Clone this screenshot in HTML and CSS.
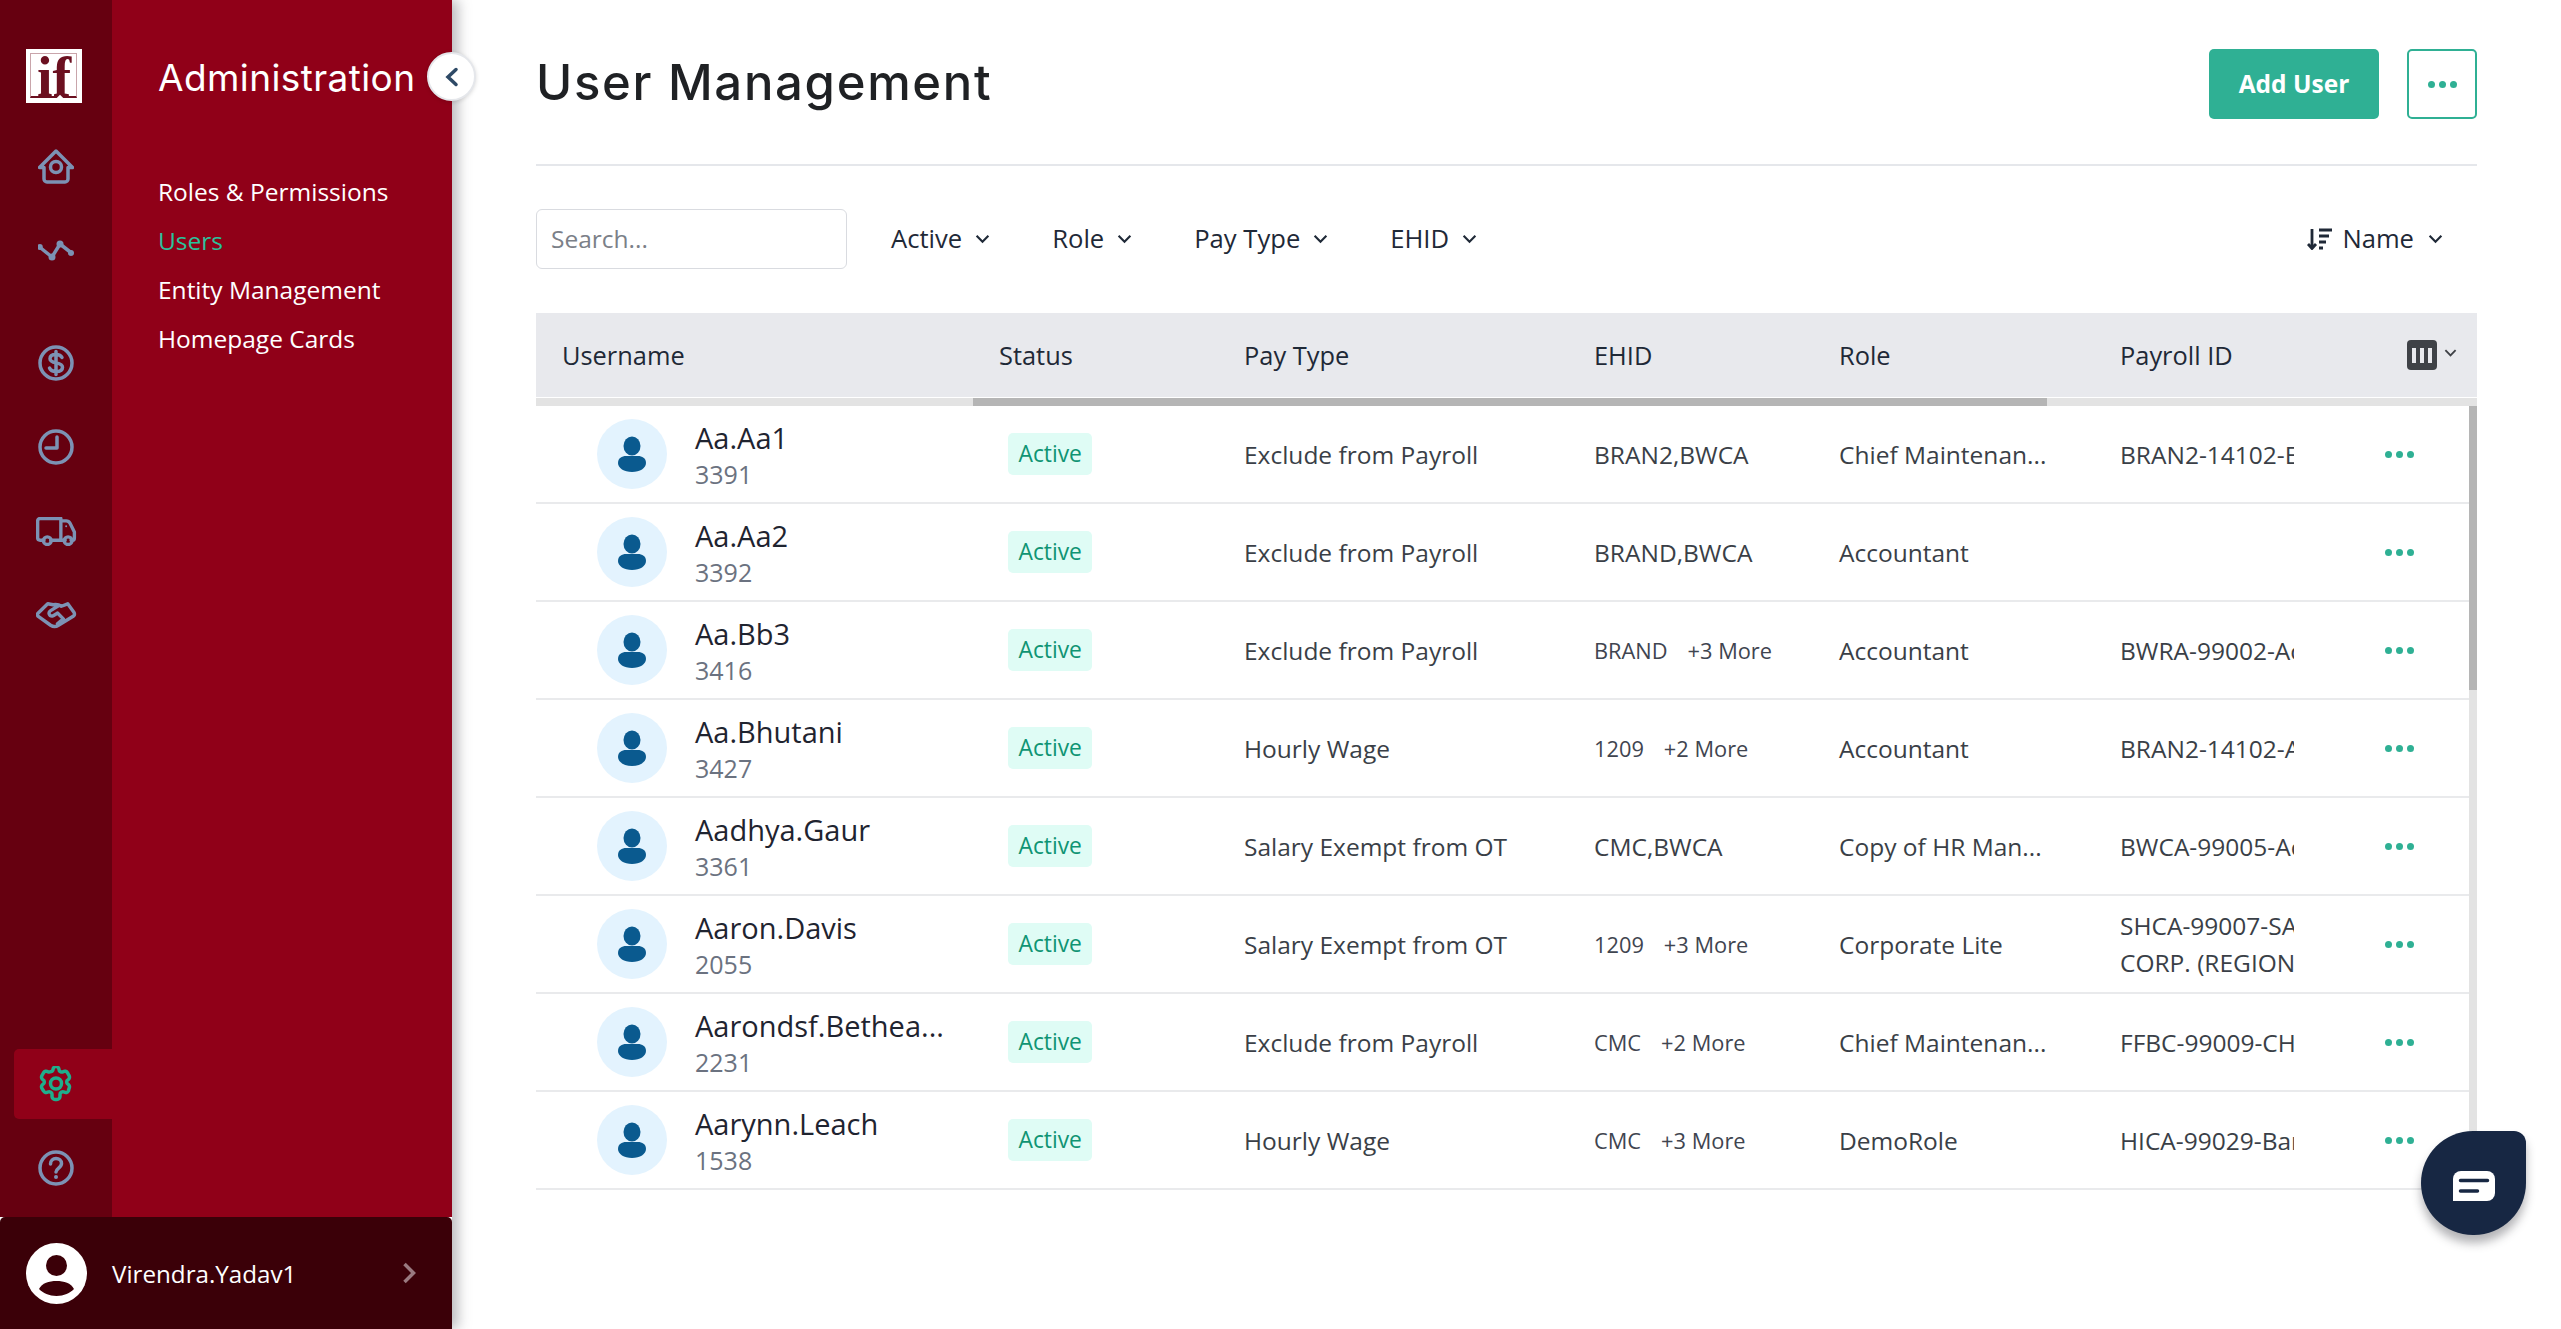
FILE: index.html
```html
<!DOCTYPE html>
<html lang="en">
<head>
<meta charset="utf-8">
<title>User Management</title>
<link rel="stylesheet" href="styles.css">
</head>
<body>
<div class="app">
  <aside class="sidebar">
    <div class="sidebar-top">
      <nav class="rail">
        <div class="logo"><span class="logo-text">if</span><i class="logo-gem"></i></div>
        <div class="rail-main">
          <a class="rail-item"><svg class="ri" viewBox="0 0 36 36"><path d="M1.500 18.500 18 2l16.500 16.500H30V30a3 3 0 0 1-3 3H9a3 3 0 0 1-3-3V18.500z"/><circle cx="18" cy="18" r="5.500"/></svg></a>
          <a class="rail-item"><svg class="ri" viewBox="0 0 36 36"><path d="M1.500 14 14 24l8-13 11.500 9"/><circle class="dot" cx="1.800" cy="14" r="3"/><circle class="dot" cx="14" cy="24" r="3.500"/><circle class="dot" cx="22" cy="11" r="3.500"/><circle class="dot" cx="33" cy="20" r="3"/></svg></a>
          <a class="rail-item rail-gap"><svg class="ri" viewBox="0 0 36 36"><circle cx="18" cy="18" r="16"/><path d="M24 12.500c-1-2-3-3-6-3-3.500 0-6 1.500-6 4.200 0 5.800 12.500 2.500 12.500 8.500 0 2.800-2.800 4.300-6.500 4.300-3 0-5.500-1.200-6.500-3.500M18 6.500v23"/></svg></a>
          <a class="rail-item"><svg class="ri" viewBox="0 0 36 36"><circle cx="18" cy="18" r="16"/><path d="M19 8v11h-11"/></svg></a>
          <a class="rail-item"><svg class="ri ri-wide" viewBox="0 0 42 30"><path d="M8 24H4a2.500 2.500 0 0 1-2.500-2.500V4A2.500 2.500 0 0 1 4 1.500h21.500V24H15M25.500 4h5.500c2 0 3.200 1 4 2.500l4.500 9V22a2 2 0 0 1-2 2h-1.500M30 24h-4.500"/><circle cx="11.500" cy="24.500" r="4"/><circle cx="33" cy="24.500" r="4"/><circle class="dot" cx="31" cy="9.500" r="1"/></svg></a>
          <a class="rail-item"><svg class="ri ri-wide" viewBox="0 0 42 28"><path d="M12 2 1.800 12c-.8 1-.5 2 .5 3L15 24c3 2 5 2 8 0l15.500-9.500c1.200-1 1.200-2 .5-3.500L32.500 2 26 4.500c-3-2-6-2-8.500-1.500zM23 4l-8 5c-3 2-1.500 6 2 5.500 2-.3 3-2 5-3l6 6-6 5"/></svg></a>
        </div>
        <div class="rail-bottom">
          <a class="rail-item rail-active"><svg class="ri ri-green" viewBox="0 0 36 36"><path d="M15 3.500a3 3 0 0 1 6 0c0 2 2.500 3.200 4.200 2.200a3 3 0 0 1 4.200 1l1.600 2.800a3 3 0 0 1-1 4.200c-1.800 1-1.800 3.600 0 4.600a3 3 0 0 1 1 4.200L30.400 25a3 3 0 0 1-4.200 1.100c-1.700-1-4.200.2-4.200 2.200v2.200a3 3 0 0 1-3 3h-2a3 3 0 0 1-3-3v-2.200c0-2-2.500-3.200-4.200-2.200A3 3 0 0 1 5.600 25L4 22.500a3 3 0 0 1 1-4.200c1.800-1 1.800-3.600 0-4.600a3 3 0 0 1-1-4.200l1.600-2.800a3 3 0 0 1 4.200-1C11.500 6.700 15 5.500 15 3.500z"/><circle cx="18" cy="17.500" r="5.500"/></svg></a>
          <a class="rail-item"><svg class="ri" viewBox="0 0 36 36"><circle cx="18" cy="18" r="16"/><path d="M12.500 14c0-3.500 2.500-5.500 5.500-5.500s5.500 2 5.500 5c0 4.500-5.500 4.500-5.500 8.500"/><circle class="dot" cx="18" cy="27" r="2"/></svg></a>
        </div>
      </nav>
      <div class="panel">
        <h2 class="panel-title">Administration</h2>
        <ul class="panel-menu">
          <li>Roles &amp; Permissions</li>
          <li class="current">Users</li>
          <li>Entity Management</li>
          <li>Homepage Cards</li>
        </ul>
      </div>
    </div>
    <div class="user-bar">
      <svg class="user-avatar" viewBox="0 0 61 61"><circle cx="30.500" cy="30.500" r="30.500" fill="#fff"/><circle cx="30.500" cy="22.500" r="10.500" fill="#3b0008"/><path d="M13 46c3-6 10-8 17.500-8S45 40 48 46c-4 4-10 7-17.500 7S17 50 13 46z" fill="#3b0008"/></svg>
      <span class="user-name">Virendra.Yadav1</span>
      <svg class="user-chev" viewBox="0 0 14 22"><path d="M2.500 2 11.500 11l-9 9"/></svg>
    </div>
    <button class="collapse"><svg viewBox="0 0 14 20"><path d="M11 2.500 3 10l8 7.500"/></svg></button>
  </aside>

  <main class="main">
    <header class="page-head">
      <h1 class="page-title">User Management</h1>
      <div class="page-actions">
        <button class="btn-primary">Add User</button>
        <button class="btn-more"><span class="dots"><i></i><i></i><i></i></span></button>
      </div>
    </header>

    <div class="filters">
      <div class="search">Search...</div>
      <div class="filter f1">Active<svg class="chev" viewBox="0 0 14 9"><path d="M1.500 1.500 7 7l5.500-5.500"/></svg></div>
      <div class="filter f2">Role<svg class="chev" viewBox="0 0 14 9"><path d="M1.500 1.500 7 7l5.500-5.500"/></svg></div>
      <div class="filter f3">Pay Type<svg class="chev" viewBox="0 0 14 9"><path d="M1.500 1.500 7 7l5.500-5.500"/></svg></div>
      <div class="filter f4">EHID<svg class="chev" viewBox="0 0 14 9"><path d="M1.500 1.500 7 7l5.500-5.500"/></svg></div>
      <div class="sort">
        <svg class="sort-icon" viewBox="0 0 26 22"><path d="M5 1v19M1 16l4 4.500L9 16M12 2h13M12 8h10M12 14h7M12 20h4"/></svg>
        Name<svg class="chev sort-chev" viewBox="0 0 14 9"><path d="M1.500 1.500 7 7l5.500-5.500"/></svg>
      </div>
    </div>

    <section class="table">
      <div class="thead">
        <div class="th c-user">Username</div>
        <div class="th">Status</div>
        <div class="th">Pay Type</div>
        <div class="th">EHID</div>
        <div class="th">Role</div>
        <div class="th">Payroll ID</div>
        <div class="col-pick">
          <svg class="col-icon" viewBox="0 0 30 30"><rect width="30" height="30" rx="4" fill="#3f4247"/><path d="M5 8h4v15H5zM13 8h4v15h-4zM21 8h4v15h-4z" fill="#e8e9ed"/></svg>
          <svg class="chev col-chev" viewBox="0 0 14 9"><path d="M1.500 1.500 7 7l5.500-5.500"/></svg>
        </div>
      </div>
      <div class="hbar"><div class="hthumb"></div></div>
      <div class="tbody-wrap">
        <div class="tbody">

          <div class="tr">
            <div class="td td-user"><svg class="avatar" viewBox="0 0 70 70"><circle cx="35" cy="35" r="35" fill="#e3f3fe"/><ellipse cx="35" cy="27" rx="8.500" ry="9.500" fill="#0a5a8f"/><path d="M21 44c0-5 4-7 8-7h12c4 0 8 2 8 7 0 5-6 9-14 9s-14-4-14-9z" fill="#0a5a8f"/></svg><div class="who"><div class="who-name">Aa.Aa1</div><div class="who-id">3391</div></div></div>
            <div class="td td-badge"><span class="badge">Active</span></div>
            <div class="td">Exclude from Payroll</div>
            <div class="td">BRAN2,BWCA</div>
            <div class="td">Chief Maintenan...</div>
            <div class="td"><div class="clip">BRAN2-14102-Exec</div></div>
            <div class="td td-act"><span class="dots"><i></i><i></i><i></i></span></div>
          </div>

          <div class="tr">
            <div class="td td-user"><svg class="avatar" viewBox="0 0 70 70"><circle cx="35" cy="35" r="35" fill="#e3f3fe"/><ellipse cx="35" cy="27" rx="8.500" ry="9.500" fill="#0a5a8f"/><path d="M21 44c0-5 4-7 8-7h12c4 0 8 2 8 7 0 5-6 9-14 9s-14-4-14-9z" fill="#0a5a8f"/></svg><div class="who"><div class="who-name">Aa.Aa2</div><div class="who-id">3392</div></div></div>
            <div class="td td-badge"><span class="badge">Active</span></div>
            <div class="td">Exclude from Payroll</div>
            <div class="td">BRAND,BWCA</div>
            <div class="td">Accountant</div>
            <div class="td"></div>
            <div class="td td-act"><span class="dots"><i></i><i></i><i></i></span></div>
          </div>

          <div class="tr">
            <div class="td td-user"><svg class="avatar" viewBox="0 0 70 70"><circle cx="35" cy="35" r="35" fill="#e3f3fe"/><ellipse cx="35" cy="27" rx="8.500" ry="9.500" fill="#0a5a8f"/><path d="M21 44c0-5 4-7 8-7h12c4 0 8 2 8 7 0 5-6 9-14 9s-14-4-14-9z" fill="#0a5a8f"/></svg><div class="who"><div class="who-name">Aa.Bb3</div><div class="who-id">3416</div></div></div>
            <div class="td td-badge"><span class="badge">Active</span></div>
            <div class="td">Exclude from Payroll</div>
            <div class="td td-more"><span>BRAND</span><span>+3 More</span></div>
            <div class="td">Accountant</div>
            <div class="td"><div class="clip">BWRA-99002-Acc</div></div>
            <div class="td td-act"><span class="dots"><i></i><i></i><i></i></span></div>
          </div>

          <div class="tr">
            <div class="td td-user"><svg class="avatar" viewBox="0 0 70 70"><circle cx="35" cy="35" r="35" fill="#e3f3fe"/><ellipse cx="35" cy="27" rx="8.500" ry="9.500" fill="#0a5a8f"/><path d="M21 44c0-5 4-7 8-7h12c4 0 8 2 8 7 0 5-6 9-14 9s-14-4-14-9z" fill="#0a5a8f"/></svg><div class="who"><div class="who-name">Aa.Bhutani</div><div class="who-id">3427</div></div></div>
            <div class="td td-badge"><span class="badge">Active</span></div>
            <div class="td">Hourly Wage</div>
            <div class="td td-more"><span>1209</span><span>+2 More</span></div>
            <div class="td">Accountant</div>
            <div class="td"><div class="clip">BRAN2-14102-Acc</div></div>
            <div class="td td-act"><span class="dots"><i></i><i></i><i></i></span></div>
          </div>

          <div class="tr">
            <div class="td td-user"><svg class="avatar" viewBox="0 0 70 70"><circle cx="35" cy="35" r="35" fill="#e3f3fe"/><ellipse cx="35" cy="27" rx="8.500" ry="9.500" fill="#0a5a8f"/><path d="M21 44c0-5 4-7 8-7h12c4 0 8 2 8 7 0 5-6 9-14 9s-14-4-14-9z" fill="#0a5a8f"/></svg><div class="who"><div class="who-name">Aadhya.Gaur</div><div class="who-id">3361</div></div></div>
            <div class="td td-badge"><span class="badge">Active</span></div>
            <div class="td">Salary Exempt from OT</div>
            <div class="td">CMC,BWCA</div>
            <div class="td">Copy of HR Man...</div>
            <div class="td"><div class="clip">BWCA-99005-Acc</div></div>
            <div class="td td-act"><span class="dots"><i></i><i></i><i></i></span></div>
          </div>

          <div class="tr">
            <div class="td td-user"><svg class="avatar" viewBox="0 0 70 70"><circle cx="35" cy="35" r="35" fill="#e3f3fe"/><ellipse cx="35" cy="27" rx="8.500" ry="9.500" fill="#0a5a8f"/><path d="M21 44c0-5 4-7 8-7h12c4 0 8 2 8 7 0 5-6 9-14 9s-14-4-14-9z" fill="#0a5a8f"/></svg><div class="who"><div class="who-name">Aaron.Davis</div><div class="who-id">2055</div></div></div>
            <div class="td td-badge"><span class="badge">Active</span></div>
            <div class="td">Salary Exempt from OT</div>
            <div class="td td-more"><span>1209</span><span>+3 More</span></div>
            <div class="td">Corporate Lite</div>
            <div class="td"><div class="clip clip-two">SHCA-99007-SALES<br>CORP. (REGIONAL)</div></div>
            <div class="td td-act"><span class="dots"><i></i><i></i><i></i></span></div>
          </div>

          <div class="tr">
            <div class="td td-user"><svg class="avatar" viewBox="0 0 70 70"><circle cx="35" cy="35" r="35" fill="#e3f3fe"/><ellipse cx="35" cy="27" rx="8.500" ry="9.500" fill="#0a5a8f"/><path d="M21 44c0-5 4-7 8-7h12c4 0 8 2 8 7 0 5-6 9-14 9s-14-4-14-9z" fill="#0a5a8f"/></svg><div class="who"><div class="who-name">Aarondsf.Bethea...</div><div class="who-id">2231</div></div></div>
            <div class="td td-badge"><span class="badge">Active</span></div>
            <div class="td">Exclude from Payroll</div>
            <div class="td td-more"><span>CMC</span><span>+2 More</span></div>
            <div class="td">Chief Maintenan...</div>
            <div class="td"><div class="clip">FFBC-99009-CHIEF</div></div>
            <div class="td td-act"><span class="dots"><i></i><i></i><i></i></span></div>
          </div>

          <div class="tr">
            <div class="td td-user"><svg class="avatar" viewBox="0 0 70 70"><circle cx="35" cy="35" r="35" fill="#e3f3fe"/><ellipse cx="35" cy="27" rx="8.500" ry="9.500" fill="#0a5a8f"/><path d="M21 44c0-5 4-7 8-7h12c4 0 8 2 8 7 0 5-6 9-14 9s-14-4-14-9z" fill="#0a5a8f"/></svg><div class="who"><div class="who-name">Aarynn.Leach</div><div class="who-id">1538</div></div></div>
            <div class="td td-badge"><span class="badge">Active</span></div>
            <div class="td">Hourly Wage</div>
            <div class="td td-more"><span>CMC</span><span>+3 More</span></div>
            <div class="td">DemoRole</div>
            <div class="td"><div class="clip">HICA-99029-Bank</div></div>
            <div class="td td-act"><span class="dots"><i></i><i></i><i></i></span></div>
          </div>

        </div>
        <div class="vbar"><div class="vthumb"></div></div>
      </div>
    </section>
  </main>
</div>
<button class="chat"><svg viewBox="0 0 42 30"><path d="M8 0h26a8 8 0 0 1 8 8v14a8 8 0 0 1-8 8H0V8a8 8 0 0 1 8-8z" fill="#fff"/><path d="M7.500 9.500h27M7.500 20h17" stroke="#172743" stroke-width="3.500" stroke-linecap="round" fill="none"/></svg></button>
</body>
</html>
```

FILE: styles.css
```css
* { box-sizing: border-box; }
html, body { margin: 0; height: 100%; overflow: hidden; background: #fff; }
body { font-family: "Open Sans", "Noto Sans", sans-serif; color: #1f2937; font-size: 24.500px; }

.app { display: flex; height: 1329px; }

/* sidebar */
.sidebar { position: relative; width: 452px; flex: none; display: flex; flex-direction: column; box-shadow: 6px 0 12px rgba(60, 60, 70, .35); z-index: 2; }
.sidebar-top { flex: 1; display: flex; min-height: 0; }
.rail { width: 112px; flex: none; background: #660010; display: flex; flex-direction: column; padding: 49px 0 14px; }
.logo { position: relative; width: 56px; height: 54px; margin-left: 26px; background: #fff; display: flex; justify-content: center; align-items: flex-end; flex: none; }
.logo::before { content: ""; position: absolute; left: 4px; right: 5px; top: 4px; bottom: 5px; border: 1.500px solid #c9a5ab; border-bottom: 2.500px solid #6b1020; }
.logo-text { position: relative; font-family: "Liberation Serif", serif; font-weight: 700; font-size: 56px; line-height: 48px; height: 50px; color: #6b1020; letter-spacing: 0; }
.logo-gem { position: absolute; left: 31px; bottom: 1px; width: 6px; height: 6px; background: #fff; transform: rotate(45deg); }
.rail-main { display: flex; flex-direction: column; margin-top: 29px; gap: 14.400px; }
.rail-bottom { margin-top: auto; display: flex; flex-direction: column; gap: 14px; }
.rail-item { height: 70px; display: flex; align-items: center; justify-content: center; }
.rail-gap { margin-top: 27px; }
.rail-active { margin-left: 14px; padding-right: 14px; background: #900018; border-radius: 5px 0 0 5px; }
.ri { width: 36px; height: 36px; fill: none; stroke: #7c92b4; stroke-width: 3.500; stroke-linecap: round; stroke-linejoin: round; }
.ri .dot { fill: #7c92b4; stroke: none; }
.ri-wide { width: 41px; height: 29px; }
.ri-green { stroke: #1fae8c; }

.panel { flex: 1; background: #900018; padding: 55px 0 0 46px; min-width: 0; }
.panel-title { margin: 0; font-family: Inter, sans-serif; font-weight: 400; font-size: 37px; letter-spacing: .4px; line-height: 46px; color: #fff; white-space: nowrap; }
.panel-menu { list-style: none; margin: 66px 0 0; padding: 0; color: #fff; }
.panel-menu li { height: 49px; line-height: 49px; white-space: nowrap; }
.panel-menu .current { color: #2bc29c; }

.user-bar { height: 112px; flex: none; background: #3b0008; border-radius: 5px 5px 0 0; display: flex; align-items: center; padding: 0 36px 0 26px; color: #fff; }
.user-avatar { width: 61px; height: 61px; flex: none; }
.user-name { margin-left: 25px; flex: 1; font-size: 24.200px; }
.user-chev { width: 14px; height: 22px; fill: none; stroke: #9a7a80; stroke-width: 3.500; }
.collapse { position: absolute; left: 427px; top: 52px; width: 49px; height: 49px; padding: 0; border-radius: 50%; background: #fff; border: 2px solid #e5e7eb; box-shadow: 0 1px 4px rgba(0, 0, 0, .15); display: flex; align-items: center; justify-content: center; }
.collapse svg { width: 14px; height: 20px; fill: none; stroke: #2e4a66; stroke-width: 3.500; stroke-linecap: round; }

/* main */
.main { flex: 1; min-width: 0; padding: 0 84px; }
.page-head { height: 166px; border-bottom: 2px solid #e5e7eb; display: flex; align-items: flex-start; justify-content: space-between; }
.page-title { margin: 56px 0 0; font-family: Inter, sans-serif; font-weight: 500; font-size: 49px; letter-spacing: 1.700px; line-height: 54px; color: #1f2124; white-space: nowrap; }
.page-actions { display: flex; gap: 28px; padding-top: 49px; }
.btn-primary { width: 170px; height: 70px; background: #2fb094; color: #fff; border: 0; border-radius: 5px; font: 700 24.500px "Open Sans", sans-serif; padding: 0 0 2px; }
.btn-more { width: 70px; height: 70px; background: #fff; border: 2px solid #2fb094; border-radius: 5px; padding: 0; display: flex; align-items: center; justify-content: center; }
.dots { display: inline-flex; gap: 4px; }
.dots i { width: 7px; height: 7px; border-radius: 50%; background: #2fb094; }

.filters { height: 147px; display: flex; align-items: center; padding-bottom: 2px; font-size: 25.600px; font-weight: 500; }
.search { width: 311px; height: 60px; border: 1.500px solid #d9dbe0; border-radius: 6px; padding: 0 14px; line-height: 57px; color: #7b8088; font-size: 24.500px; font-weight: 400; }
.filter { display: flex; align-items: center; color: #1f2937; white-space: nowrap; }
.chev { width: 15px; height: 10px; fill: none; stroke: #1f2937; stroke-width: 2; margin-left: 13px; flex: none; }
.f1 { margin-left: 44px; }
.f2 { margin-left: 62px; }
.f3 { margin-left: 62px; }
.f4 { margin-left: 62px; }
.sort { margin-left: auto; padding-right: 34px; display: flex; align-items: center; }
.sort-icon { width: 26px; height: 22px; fill: none; stroke: #1f2937; stroke-width: 2.800; margin-right: 9px; }
.sort-chev { margin-left: 14px; }

/* table */
.table { --cols: 437px 245px 350px 245px 281px 226px; }
.thead { height: 84px; background: #e8e9ed; display: grid; grid-template-columns: var(--cols) 1fr; align-items: center; color: #1f2937; font-weight: 500; font-size: 25.400px; }
.th { padding-left: 26px; }
.col-pick { display: flex; align-items: center; padding-left: 87px; }
.col-icon { width: 30px; height: 30px; flex: none; }
.col-chev { margin-left: 7px; width: 13px; margin-top: -5px; stroke: #3f4247; }
.hbar { margin-top: 1px; height: 8px; background: #e3e3e3; }
.hthumb { margin-left: 437px; width: 1074px; height: 8px; background: #b5b5b5; }
.tbody-wrap { display: flex; }
.tbody { flex: 1; min-width: 0; }
.vbar { width: 8px; flex: none; background: #e3e3e3; }
.vthumb { height: 284px; background: #b5b5b5; }
.tr { height: 98px; border-bottom: 2px solid #e9eaec; display: grid; grid-template-columns: var(--cols) 1fr; align-items: center; color: #3a3f47; }
.td { padding-left: 26px; white-space: nowrap; min-width: 0; }
.td-user { padding-left: 61px; display: flex; align-items: center; }
.avatar { width: 70px; height: 70px; flex: none; }
.who { margin-left: 28px; padding-top: 2px; }
.who-name { font-size: 29px; line-height: 37px; color: #1f2430; }
.who-id { font-size: 25px; line-height: 36px; color: #6b7280; }
.td-badge { display: flex; }
.badge { margin-left: 9px; padding: 0 10.500px; height: 42px; line-height: 42px; font-size: 22.800px; font-weight: 500; color: #0f9473; background: #dffcf5; border-radius: 5px; }
.td-more { display: flex; gap: 20px; font-size: 21.800px; font-weight: 500; color: #3f4550; }
.clip { width: 174px; overflow: hidden; white-space: nowrap; }
.clip-two { line-height: 37px; }
.td-act { padding-left: 65px; display: flex; }

.chat { position: fixed; left: 2421px; top: 1131px; width: 105px; height: 104px; padding: 0; border: 0; background: #172743; border-radius: 52px 12px 52px 52px; box-shadow: 0 8px 10px rgba(40, 40, 50, .35); display: flex; align-items: center; justify-content: center; z-index: 5; }
.chat svg { width: 42px; height: 30px; margin-top: 6px; }
```
